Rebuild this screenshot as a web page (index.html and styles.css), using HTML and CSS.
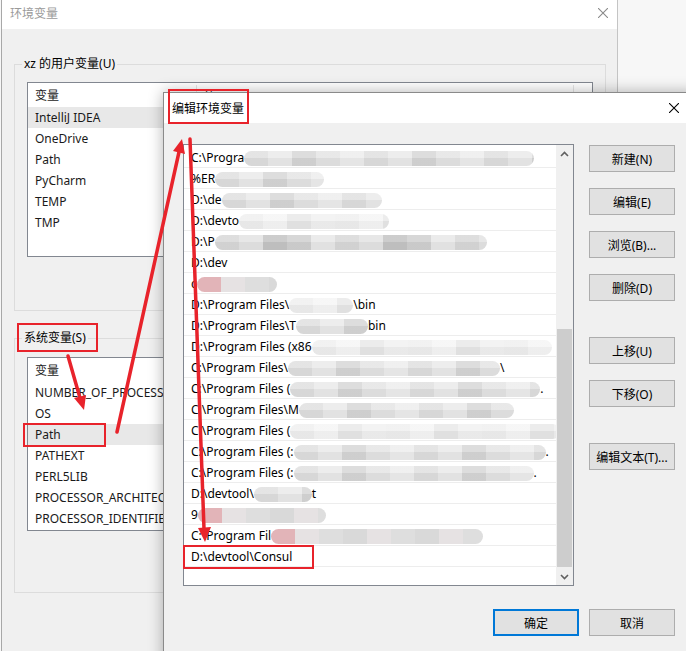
FILE: index.html
```html
<!DOCTYPE html>
<html lang="zh-CN">
<head>
    <meta charset="UTF-8">
    <title>编辑环境变量</title>
    <link rel="stylesheet" href="styles.css">
</head>
<body>
<div class="desk">

    <!-- back window: 环境变量 -->
    <div class="win back">
        <div class="titlebar">
            <span class="title">环境变量</span>
            <svg class="close" width="10" height="10" viewBox="0 0 10 10"><path d="M0 0L10 10M10 0L0 10"/></svg>
        </div>
        <div class="win-body">
            <fieldset class="group user">
                <legend>xz 的用户变量(U)</legend>
                <div class="varlist">
                    <div class="vhead"><span class="c1">变量</span><span class="c2">值</span><span class="c3"></span></div>
                    <div class="vrow sel">IntelliJ IDEA</div>
                    <div class="vrow">OneDrive</div>
                    <div class="vrow">Path</div>
                    <div class="vrow">PyCharm</div>
                    <div class="vrow">TEMP</div>
                    <div class="vrow">TMP</div>
                </div>
            </fieldset>
            <fieldset class="group sys">
                <legend>系统变量(S)</legend>
                <div class="varlist">
                    <div class="vhead"><span class="c1">变量</span><span class="c2"></span><span class="c3"></span></div>
                    <div class="vrow">NUMBER_OF_PROCESSORS</div>
                    <div class="vrow">OS</div>
                    <div class="vrow sel">Path</div>
                    <div class="vrow">PATHEXT</div>
                    <div class="vrow">PERL5LIB</div>
                    <div class="vrow">PROCESSOR_ARCHITECTURE</div>
                    <div class="vrow">PROCESSOR_IDENTIFIER</div>
                </div>
            </fieldset>
        </div>
    </div>

    <!-- front window: 编辑环境变量 -->
    <div class="win front">
        <div class="titlebar">
            <span class="title">编辑环境变量</span>
            <svg class="close" width="10" height="10" viewBox="0 0 10 10"><path d="M0 0L10 10M10 0L0 10"/></svg>
        </div>
        <div class="dlg-body">
            <div class="dlg-main">
                <div class="pathlist">
                    <div class="rows">
                        <div class="prow">C:\Progra<span class="blur" style="width:290px"></span></div>
                        <div class="prow">%ER<span class="blur" style="width:109px"></span></div>
                        <div class="prow">D:\de<span class="blur" style="width:160px"></span></div>
                        <div class="prow">D:\devto<span class="blur lt" style="width:150px"></span></div>
                        <div class="prow">D:\P<span class="blur dk" style="width:272px"></span></div>
                        <div class="prow">D:\dev</div>
                        <div class="prow">c<span class="blur pk" style="width:80px"></span></div>
                        <div class="prow">D:\Program Files\<span class="blur lt" style="width:64px"></span>\bin</div>
                        <div class="prow">D:\Program Files\T<span class="blur" style="width:72px"></span>bin</div>
                        <div class="prow">D:\Program Files (x86<span class="blur lt" style="width:240px"></span></div>
                        <div class="prow">C:\Program Files\<span class="blur" style="width:212px"></span>\</div>
                        <div class="prow">C:\Program Files (<span class="blur" style="width:250px"></span>.</div>
                        <div class="prow">C:\Program Files\M<span class="blur" style="width:215px"></span></div>
                        <div class="prow">C:\Program Files (<span class="blur lt" style="width:270px"></span></div>
                        <div class="prow">C:\Program Files (:<span class="blur" style="width:252px"></span>.</div>
                        <div class="prow">C:\Program Files (:<span class="blur" style="width:240px"></span>.</div>
                        <div class="prow">D:\devtool\<span class="blur" style="width:58px"></span>t</div>
                        <div class="prow">9<span class="blur pk" style="width:128px"></span></div>
                        <div class="prow">C:\Program Fil<span class="blur pk" style="width:212px"></span></div>
                        <div class="prow">D:\devtool\Consul</div>
                    </div>
                    <div class="sbar">
                        <div class="sb-btn"><svg width="9" height="6" viewBox="0 0 9 6"><path d="M1 5L4.5 1.5L8 5"/></svg></div>
                        <div class="sb-track"><div class="sb-thumb"></div></div>
                        <div class="sb-btn"><svg width="9" height="6" viewBox="0 0 9 6"><path d="M1 1L4.5 4.5L8 1"/></svg></div>
                    </div>
                </div>
                <div class="side">
                    <button class="btn">新建(N)</button>
                    <button class="btn">编辑(E)</button>
                    <button class="btn">浏览(B)...</button>
                    <button class="btn">删除(D)</button>
                    <button class="btn sep">上移(U)</button>
                    <button class="btn">下移(O)</button>
                    <button class="btn sep">编辑文本(T)...</button>
                </div>
            </div>
            <div class="dlg-foot">
                <button class="btn default">确定</button>
                <button class="btn">取消</button>
            </div>
        </div>
    </div>

    <!-- red annotations drawn over both windows -->
    <svg class="marks" width="686" height="651" viewBox="0 0 686 651">
        <g class="box">
            <rect x="169" y="90" width="79" height="33"/>
            <rect x="18" y="324" width="79" height="27"/>
            <rect x="24" y="424" width="81" height="22"/>
            <rect x="184" y="546" width="129" height="22"/>
        </g>
        <g class="arrow">
            <line x1="68" y1="356" x2="80" y2="398"/>
            <polygon points="84,410 86,395 74,398"/>
            <line x1="117" y1="432" x2="179" y2="152"/>
            <polygon points="182,139 185,154 173,151"/>
            <line x1="190" y1="139" x2="204" y2="529"/>
            <polygon points="205,542 211,527 198,528"/>
        </g>
    </svg>
</div>
</body>
</html>
```

FILE: styles.css
```css
body {
    margin: 0;
    background: #f7f7f7;
    font-family: "Noto Sans", "Noto Sans CJK SC", sans-serif;
    font-size: 12px;
    color: #000;
}

.desk {
    position: relative;
    width: 686px;
    height: 651px;
    overflow: hidden;
}

.win {
    position: absolute;
    background: #f0f0f0;
    box-sizing: border-box;
}

.titlebar {
    background: #fff;
    display: flex;
    align-items: center;
    justify-content: space-between;
}

.close path {
    fill: none;
    stroke-width: 1.1;
}

/* back window */
.back {
    left: 1px;
    top: 0;
    width: 617px;
    height: 700px;
    border-left: 1px solid #a8a8a8;
    border-right: 1px solid #c4c4c4;
}

.back .titlebar {
    height: 29px;
    padding: 0 9px 3px 8px;
    box-sizing: border-box;
}

.back .title {
    color: #9a9a9a;
}

.back .close path {
    stroke: #8a8a8a;
}

.win-body {
    padding: 27px 11px 0 12px;
}

.group {
    margin: 0;
    border: 1px solid #dcdcdc;
    min-width: 0;
}

.group legend {
    padding: 0 2px;
    margin-left: -5px;
    height: 16px;
    line-height: 16px;
}

.group.user {
    padding: 10px 12px 53px;
}

.group.sys {
    margin-top: 19px;
    padding: 11px 12px 61px;
}

.varlist {
    background: #fff;
    border: 1px solid #828790;
    box-sizing: border-box;
    overflow: hidden;
    color: #1a1a1a;
}

.user .varlist {
    height: 175px;
}

.sys .varlist {
    height: 174px;
}

.vhead {
    display: flex;
    height: 24px;
    box-sizing: border-box;
    padding-top: 2px;
    line-height: 22px;
}

.vhead span {
    box-sizing: border-box;
    padding-left: 7px;
}

.vhead .c1 {
    width: 169px;
    border-right: 1px solid #e5e5e5;
}

.vhead .c2 {
    flex: 1;
}

.vhead .c3 {
    width: 19px;
    border-left: 1px solid #e5e5e5;
}

.vrow {
    height: 21px;
    line-height: 22px;
    padding-left: 7px;
    white-space: nowrap;
}

.vrow.sel {
    background: #e8e8e8;
}

/* front window */
.front {
    left: 163px;
    top: 92px;
    width: 534px;
    height: 580px;
    border: 1px solid #8a8a8a;
    box-shadow: 0 0 14px rgba(0, 0, 0, 0.3);
}

.front .titlebar {
    height: 30px;
    padding: 0 17px 0 8px;
}

.front .close path {
    stroke: #000;
}

.dlg-body {
    padding: 21px 21px 0 19px;
}

.dlg-main {
    display: flex;
    gap: 15px;
}

.pathlist {
    width: 391px;
    height: 442px;
    box-sizing: border-box;
    border: 1px solid #828790;
    background: #fff;
    display: flex;
}

.rows {
    flex: 1;
    padding-top: 2px;
    overflow: hidden;
}

.prow {
    height: 21px;
    line-height: 22px;
    border-bottom: 1px solid #ededed;
    box-sizing: border-box;
    padding-left: 7px;
    white-space: nowrap;
}

.blur {
    display: inline-block;
    height: 15px;
    vertical-align: middle;
    border-radius: 8px;
    filter: blur(0.6px);
    background:
        linear-gradient(180deg, rgba(255, 255, 255, 0.2) 50%, rgba(0, 0, 0, 0.03) 50%),
        repeating-linear-gradient(90deg, #dedede 0 24px, #e9e9e9 24px 48px, #d5d5d5 48px 72px, #e3e3e3 72px 96px, #ececec 96px 120px);
}

.blur.lt {
    background:
        linear-gradient(180deg, rgba(255, 255, 255, 0.3) 50%, rgba(0, 0, 0, 0.02) 50%),
        repeating-linear-gradient(90deg, #ececec 0 24px, #f3f3f3 24px 48px, #e4e4e4 48px 72px, #eeeeee 72px 96px);
}

.blur.dk {
    background:
        linear-gradient(180deg, rgba(255, 255, 255, 0.15) 50%, rgba(0, 0, 0, 0.03) 50%),
        repeating-linear-gradient(90deg, #d8d8d8 0 24px, #e3e3e3 24px 48px, #c4c4c4 48px 72px, #d0d0d0 72px 96px, #e8e8e8 96px 120px);
}

.blur.pk {
    background:
        linear-gradient(90deg, #e2b4b8 0 24px, transparent 24px),
        repeating-linear-gradient(90deg, #d9d9d9 0 24px, #e6e2e3 24px 48px, #dedede 48px 72px);
}

.sbar {
    width: 17px;
    background: #f0f0f0;
    display: flex;
    flex-direction: column;
}

.sb-btn {
    height: 17px;
    display: flex;
    align-items: center;
    justify-content: center;
}

.sb-btn path {
    fill: none;
    stroke: #606060;
    stroke-width: 1.6;
}

.sb-track {
    flex: 1;
}

.sb-thumb {
    margin: 167px 1px 0;
    height: 238px;
    background: #cdcdcd;
}

.side {
    display: flex;
    flex-direction: column;
    padding-top: 1px;
}

.btn {
    width: 86px;
    height: 27px;
    box-sizing: border-box;
    background: #e1e1e1;
    border: 1px solid #adadad;
    padding: 0;
    font-family: inherit;
    font-size: 12px;
    color: #000;
}

.side .btn + .btn {
    margin-top: 16px;
}

.side .btn.sep {
    margin-top: 36px;
}

.btn.default {
    border: 2px solid #0078d7;
}

.dlg-foot {
    display: flex;
    justify-content: flex-end;
    gap: 10px;
    margin-top: 23px;
}

/* annotations */
.marks {
    position: absolute;
    left: 0;
    top: 0;
    z-index: 5;
    pointer-events: none;
}

.marks .box rect {
    fill: none;
    stroke: #e8232b;
    stroke-width: 2;
}

.marks .arrow line {
    stroke: #e8232b;
    stroke-width: 3.5;
    stroke-linecap: round;
}

.marks .arrow polygon {
    fill: #e8232b;
}
```
